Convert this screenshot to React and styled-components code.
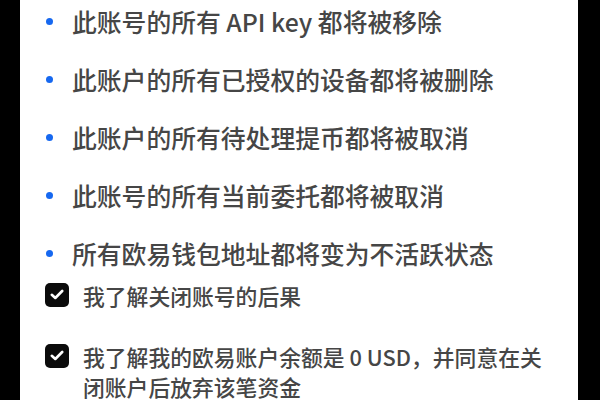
import React from 'react'
import styled, { createGlobalStyle } from 'styled-components'

const GlobalStyle = createGlobalStyle`
    html, body {
        margin: 0;
        padding: 0;
        background: #000;
    }
    body {
        font-family: "Noto Sans CJK SC", "Noto Sans", sans-serif;
    }
`

const Screen = styled.div`
    width: 600px;
    height: 400px;
    overflow: hidden;
    background: #000;
    display: flex;
`

const Sheet = styled.section`
    margin-left: 20px;
    width: 558px;
    height: 400px;
    background: #fff;
    padding: 4px 25px 0 26px;
    box-sizing: border-box;
    display: flex;
    flex-direction: column;
`

const Consequences = styled.ul`
    list-style: none;
    margin: 0;
    padding: 0;
    display: flex;
    flex-direction: column;
    gap: 24px;
`

const Item = styled.li`
    display: flex;
    align-items: center;
    gap: 19px;
    font-size: 24.8px;
    font-weight: 500;
    line-height: 34px;
    color: #464646;
    white-space: nowrap;

    &::before{
        content: '';
        width: 7px;
        height: 7px;
        border-radius: 50%;
        background: #1668f0;
        flex-shrink: 0;
    }
`

const Agreements = styled.div`
    margin-top: 11px;
    display: flex;
    flex-direction: column;
    gap: 31px;
`

const Agreement = styled.label`
    display: flex;
    align-items: flex-start;
    gap: 14px;
    margin-left: -1px;
`

const Box = styled.span`
    width: 24px;
    height: 24px;
    margin-top: 1.5px;
    border-radius: 5px;
    background: ${props => (props.checked ? '#0b0b0b' : '#fff')};
    border: ${props => (props.checked ? 'none' : '1.5px solid #999')};
    display: flex;
    align-items: center;
    justify-content: center;
    flex-shrink: 0;
`

const AgreementText = styled.span`
    width: 470px;
    font-size: 21.8px;
    font-weight: 500;
    line-height: 30px;
    color: #464646;
`

const consequences = [
    '此账号的所有 API key 都将被移除',
    '此账户的所有已授权的设备都将被删除',
    '此账户的所有待处理提币都将被取消',
    '此账号的所有当前委托都将被取消',
    '所有欧易钱包地址都将变为不活跃状态',
]

const agreements = [
    '我了解关闭账号的后果',
    '我了解我的欧易账户余额是 0 USD，并同意在关闭账户后放弃该笔资金',
]

const Check = () => (
    <svg width="14" height="11" viewBox="0 0 14 11" fill="none">
        <path d="M1.8 5.8 L5.3 9 L12.2 2" stroke="#fff" strokeWidth="2.6" strokeLinecap="round" strokeLinejoin="round" />
    </svg>
)

const App = () => {
    return (
        <Screen>
            <GlobalStyle />
            <Sheet>
                <Consequences>
                    {consequences.map(text => (
                        <Item key={text}>{text}</Item>
                    ))}
                </Consequences>
                <Agreements>
                    {agreements.map(text => (
                        <Agreement key={text}>
                            <Box checked>
                                <Check />
                            </Box>
                            <AgreementText>{text}</AgreementText>
                        </Agreement>
                    ))}
                </Agreements>
            </Sheet>
        </Screen>
    )
}

export default App
